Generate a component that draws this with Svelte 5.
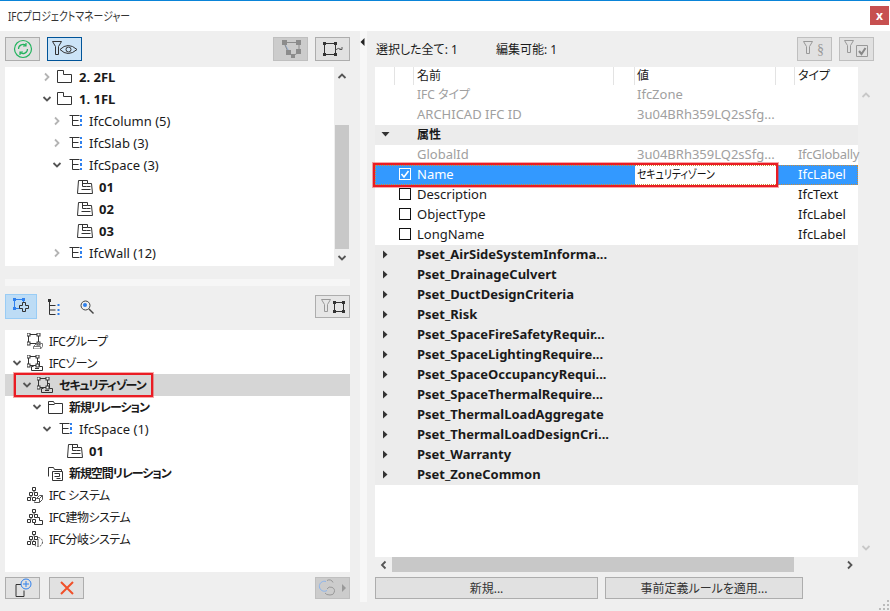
<script>
  const upperTree = [
    { depth: 3, arrow: 'closed', icon: 'story', label: '2. 2FL', bold: true },
    { depth: 3, arrow: 'open', icon: 'story', label: '1. 1FL', bold: true },
    { depth: 4, arrow: 'closed', icon: 'type', label: 'IfcColumn (5)' },
    { depth: 4, arrow: 'closed', icon: 'type', label: 'IfcSlab (3)' },
    { depth: 4, arrow: 'open', icon: 'type', label: 'IfcSpace (3)' },
    { depth: 5, icon: 'space', label: '01', bold: true },
    { depth: 5, icon: 'space', label: '02', bold: true },
    { depth: 5, icon: 'space', label: '03', bold: true },
    { depth: 4, arrow: 'closed', icon: 'type', label: 'IfcWall (12)' }
  ];

  const lowerTree = [
    { depth: 0, icon: 'group', label: 'IFCグループ' },
    { depth: 0, arrow: 'open', icon: 'zone', label: 'IFCゾーン' },
    { depth: 1, arrow: 'open', icon: 'zone', label: 'セキュリティゾーン', bold: true, selected: true },
    { depth: 2, arrow: 'open', icon: 'folder', label: '新規リレーション', bold: true },
    { depth: 3, arrow: 'open', icon: 'type', label: 'IfcSpace (1)' },
    { depth: 4, icon: 'space', label: '01', bold: true },
    { depth: 2, icon: 'folderspace', label: '新規空間リレーション', bold: true },
    { depth: 0, icon: 'sysbox', label: 'IFC システム' },
    { depth: 0, icon: 'sysbuilding', label: 'IFC建物システム' },
    { depth: 0, icon: 'sysround', label: 'IFC分岐システム' }
  ];

  const psets = [
    'Pset_AirSideSystemInforma...',
    'Pset_DrainageCulvert',
    'Pset_DuctDesignCriteria',
    'Pset_Risk',
    'Pset_SpaceFireSafetyRequir...',
    'Pset_SpaceLightingRequire...',
    'Pset_SpaceOccupancyRequi...',
    'Pset_SpaceThermalRequire...',
    'Pset_ThermalLoadAggregate',
    'Pset_ThermalLoadDesignCri...',
    'Pset_Warranty',
    'Pset_ZoneCommon'
  ];

  const attrs = [
    { name: 'Description', type: 'IfcText' },
    { name: 'ObjectType', type: 'IfcLabel' },
    { name: 'LongName', type: 'IfcLabel' }
  ];

  const isJa = (text) => /[\u3000-\u9fff]/.test(text);
</script>

{#snippet chevron(dir, color)}
  <svg class="chev" width="10" height="10" viewBox="0 0 10 10" fill="none" stroke={color} stroke-width="1.8">
    {#if dir === 'closed'}<path d="M3 1.5 L6.5 5 L3 8.5" />
    {:else if dir === 'open'}<path d="M1.5 3 L5 6.5 L8.5 3" />
    {:else if dir === 'up'}<path d="M1.5 7 L5 3.5 L8.5 7" />
    {:else if dir === 'left'}<path d="M6.5 1.5 L3 5 L6.5 8.5" />{/if}
  </svg>
{/snippet}

{#snippet frame(x, y, w, h, c)}
  <path d="M{x + 0.5} {y + 0.5} h{w} v{h} h-{w} z" fill="none" stroke={c} />
  <rect x={x - 1} y={y - 1} width="3" height="3" fill={c} />
  <rect x={x + w - 1} y={y - 1} width="3" height="3" fill={c} />
  <rect x={x - 1} y={y + h - 1} width="3" height="3" fill={c} />
  <rect x={x + w - 1} y={y + h - 1} width="3" height="3" fill={c} />
{/snippet}

{#snippet hollow(x, y, w, h)}
  <path d="M{x + 0.5} {y + 0.5} h{w} v{h} h-{w} z" fill="none" stroke="#333" />
  <rect x={x - 1} y={y - 1} width="3" height="3" fill="#fff" stroke="#333" />
  <rect x={x + w - 1} y={y - 1} width="3" height="3" fill="#fff" stroke="#333" />
  <rect x={x - 1} y={y + h - 1} width="3" height="3" fill="#fff" stroke="#333" />
  <rect x={x + w - 1} y={y + h - 1} width="3" height="3" fill="#fff" stroke="#333" />
{/snippet}

{#snippet nodes()}
  <path d="M5.5 0.5 h3 v3 h-3 z M2.5 5.5 h3 v3 h-3 z M7.5 5.5 h3 v3 h-3 z M0.5 10.5 h3 v3 h-3 z M5.5 10.5 h3 v3 h-3 z" fill="#fff" stroke="#333" />
  <path d="M7 3.5 v2 M4 8.5 v2" stroke="#333" />
{/snippet}

{#snippet icon(name)}
  <svg class="icon" width="16" height="16" viewBox="0 0 16 16" fill="none" stroke="#333">
    {#if name === 'story'}
      <path d="M0.5 1.5 h6 v4 h8 v8 h-14 z" />
    {:else if name === 'type'}
      <path d="M2.5 2.5 h10 M5.5 2.5 v10 M5.5 7.5 h6 M5.5 12.5 h7" />
      <path d="M14 2 v2 M14 6 v3 M14 11 v2" stroke="#2f80ed" stroke-width="2" />
    {:else if name === 'space'}
      <path d="M0.5 14.5 L1.5 1.5 H10.5 V4.5 H14.5 L15.5 14.5 Z" />
      <path d="M5.5 1.5 V7.5 H9.5 M5.5 4.5 H10.5 M9.5 7.5 H13.5 M4.5 10.5 H13.5" />
    {:else if name === 'group'}
      {@render hollow(1, 1, 10, 9)}
      <path d="M6.5 13.5 l3 -3 h6 v3 l-2 2.5 h-7 z M13.5 13.5 h-7 M13.5 13.5 v2.5" stroke="#777" />
    {:else if name === 'zone'}
      {@render hollow(1, 1, 9, 9)}
      <path d="M10.5 6.5 h2 v5 h3 v4 h-11 v-4 h2" />
      <path d="M8 13.5 h4" />
    {:else if name === 'folder'}
      <path d="M1.5 14.5 v-12 h5 l1 2 h8 v10 z M1.5 5.5 h6" />
    {:else if name === 'folderspace'}
      <path d="M1.5 11.5 v-9 h5 l1 2 h7 v2" />
      <path d="M5.5 15.5 v-9 h10 v9 z M7.5 8.5 h5 v3 h-5 M9.5 13.5 h4" />
    {:else if name === 'sysbox'}
      <path d="M9.5 11.5 l3 -3 h3 v4 l-3 3 h-5 v-1 M12.5 11.5 h-3 M12.5 11.5 v4 M12.5 11.5 l3 -3" stroke="#555" />
      {@render nodes()}
    {:else if name === 'sysbuilding'}
      <path d="M10.5 8.5 h2 v3 h3 v4 h-8 v-2" stroke="#333" />
      {@render nodes()}
    {:else if name === 'sysround'}
      <circle cx="11" cy="11" r="4.5" stroke="#555" stroke-dasharray="2 1" />
      <path d="M11 8 v7" stroke="#555" />
      {@render nodes()}
    {/if}
  </svg>
{/snippet}

{#snippet tree(rows)}
  {#each rows as row}
    <div class="row" class:selected={row.selected} style="padding-left: {5 + row.depth * 10}px">
      <span class="arrow">
        {#if row.arrow}{@render chevron(row.arrow, row.arrow === 'open' ? '#555' : '#b4b4b4')}{/if}
      </span>
      {@render icon(row.icon)}
      <span class="label" class:bold={row.bold} class:ja={isJa(row.label)}>{row.label}</span>
      {#if row.selected}<span class="redbox tree-red"></span>{/if}
    </div>
  {/each}
{/snippet}

<div class="window">
  <header class="titlebar">
    <span class="narrow">IFCプロジェクトマネージャー</span>
    <button class="close">x</button>
  </header>

  <div class="body">
    <section class="left">
      <div class="toolbar">
        <button class="tool">
          <svg width="22" height="22" viewBox="0 0 22 22" fill="none" stroke="#22b35e" stroke-width="1.2">
            <circle cx="11" cy="11" r="8.5" />
            <path d="M6.5 11 a4.5 4.5 0 0 1 7.5 -3.4 M14 5 v3 h-3 M15.5 11 a4.5 4.5 0 0 1 -7.5 3.4 M8 17 v-3 h3" />
          </svg>
        </button>
        <button class="tool on">
          <svg width="26" height="18" viewBox="0 0 26 18" fill="none" stroke="#333">
            <path d="M0.5 1.5 h9 l-3 5 v8 h-3 v-8 z" />
            <path d="M8 9.5 q8 -8 17 0 q-9 8 -17 0 z" />
            <circle cx="16.5" cy="9.5" r="2.5" />
          </svg>
        </button>
        <span class="spacer"></span>
        <button class="tool off">
          <svg width="22" height="20" viewBox="0 0 22 20" fill="none">
            <path d="M4 4 L11 16" stroke="#9cb4d8" stroke-width="1.4" />
            <path d="M4 3.5 H19 V13 L13 17 L8 13 Z" stroke="#8c8c8c" />
            <rect x="2" y="1" width="5" height="5" fill="#8c8c8c" />
            <rect x="16" y="1" width="5" height="5" fill="#8c8c8c" />
            <rect x="6" y="11" width="5" height="5" fill="#8c8c8c" />
            <rect x="16" y="10" width="5" height="5" fill="#8c8c8c" />
            <rect x="11" y="15" width="4" height="4" fill="#8c8c8c" />
          </svg>
        </button>
        <button class="tool gap">
          <svg width="22" height="18" viewBox="0 0 22 18" fill="none">
            {@render frame(2, 3, 11, 11, '#333')}
            <path d="M13.5 10 q2.5 -3 6 -0.5 M20 7 v2.5 h-2.5" stroke="#555" />
          </svg>
        </button>
      </div>

      <div class="upper">
        <div class="list top">{@render tree(upperTree)}</div>
        <div class="vscroll">
          <span class="chev-slot">{@render chevron('up', '#555')}</span>
          <span class="thumb"></span>
          <span class="chev-slot">{@render chevron('open', '#555')}</span>
        </div>
      </div>

      <div class="strip"></div>

      <div class="toolbar second">
        <button class="tool plus">
          <svg width="18" height="20" viewBox="0 0 18 20" fill="none">
            {@render frame(2, 2, 9, 9, '#2f80ed')}
            <path d="M7.5 8.5 h3 v-3 h3 v3 h3 v3 h-3 v3 h-3 v-3 h-3 z" stroke="#333" fill="#bddcf5" />
          </svg>
        </button>
        <span class="plain p1">
          <svg width="12" height="18" viewBox="0 0 12 18" fill="none" stroke="#333">
            <rect x="0" y="1" width="3" height="3" fill="#333" stroke="none" />
            <path d="M1.5 3 v13.5 h6 M1.5 7.5 h6 M1.5 12 h6" />
            <path d="M10.5 6 v2 M10.5 11 v2 M10.5 15 v2" stroke="#2f80ed" stroke-width="2" />
          </svg>
        </span>
        <span class="plain p2">
          <svg width="14" height="14" viewBox="0 0 14 14" fill="none" stroke="#444">
            <circle cx="5.5" cy="5.5" r="4.5" />
            <circle cx="5" cy="5" r="2" fill="#2f80ed" stroke="none" />
            <path d="M9 9 L13.5 13.5" stroke-width="1.4" />
          </svg>
        </span>
        <span class="spacer"></span>
        <button class="tool flat">
          <svg width="24" height="16" viewBox="0 0 24 16" fill="none">
            <path d="M0.5 0.5 h9 l-3 5 v7 h-3 v-7 z" stroke="#999" />
            {@render frame(13, 3, 9, 9, '#333')}
          </svg>
        </button>
      </div>

      <div class="list bottom">{@render tree(lowerTree)}</div>

      <div class="toolbar footer">
        <button class="tool">
          <svg width="20" height="20" viewBox="0 0 20 20" fill="none">
            <path d="M10 6.5 h-7 v12 h8 v-6" stroke="#333" />
            <circle cx="13" cy="6" r="5" stroke="#2f80ed" fill="#e1e1e1" />
            <path d="M13 3 v6 M10 6 h6" stroke="#2f80ed" />
          </svg>
        </button>
        <button class="tool gap-del">
          <svg width="16" height="16" viewBox="0 0 16 16" fill="none" stroke="#f0502a" stroke-width="2">
            <path d="M2 2 L14 14 M14 2 L2 14" />
          </svg>
        </button>
        <span class="spacer"></span>
        <button class="tool off">
          <svg width="30" height="18" viewBox="0 0 30 18" fill="none">
            <path d="M8 2.5 a5 5 0 1 0 1 9" stroke="#8ab4ee" />
            <path d="M9 1.5 a4 4 0 0 1 6 2 M9 10 a4 4 0 1 1 3 6 q-4 0 -5 -2" stroke="#999" />
            <path d="M24 5 l4 4 l-4 4 z" fill="#999" />
          </svg>
        </button>
      </div>
    </section>

    <div class="splitter">
      <svg width="5" height="8" viewBox="0 0 5 8"><path d="M4.5 0 V8 L0.5 4 z" fill="#222" /></svg>
    </div>

    <section class="right">
      <div class="toolbar stats">
        <span class="stat first">選択した全て: 1</span>
        <span class="stat">編集可能: 1</span>
        <span class="spacer"></span>
        <button class="tool off2">
          <svg width="30" height="18" viewBox="0 0 30 18" fill="none">
            <path d="M3.5 1.5 h9 l-3 5 v7 h-3 v-7 z" stroke="#999" />
            <text x="17" y="14" font-size="14" fill="#999" stroke="none" font-family="Liberation Serif">§</text>
          </svg>
        </button>
        <button class="tool off2 gap">
          <svg width="28" height="18" viewBox="0 0 28 18" fill="none">
            <path d="M1.5 0.5 h9 l-3 5 v7 h-3 v-7 z" stroke="#999" />
            <path d="M13.5 5.5 h11 v11 h-11 z" stroke="#999" />
            <path d="M16 11 l2.5 3 l4 -6" stroke="#888" stroke-width="2" />
          </svg>
        </button>
      </div>

      <div class="table-wrap">
        <div class="table">
          <div class="thead">
            <span class="h h1"></span><span class="h h2"></span>
            <span class="h h3">名前</span><span class="h h4"></span>
            <span class="h h5">値</span><span class="h h6"></span>
            <span class="h h7">タイプ</span>
          </div>

          <div class="tr dim"><span></span><span class="small">IFC タイプ</span><span>IfcZone</span><span></span></div>
          <div class="tr dim"><span></span><span>ARCHICAD IFC ID</span><span>3u04BRh359LQ2sSfg...</span><span></span></div>
          <div class="tr grp">
            <span class="tri"><svg width="9" height="5" viewBox="0 0 9 5"><path d="M0.5 0 H8.5 L4.5 4.5 z" fill="#333" /></svg></span>
            <span class="small">属性</span><span></span><span></span>
          </div>
          <div class="tr dim"><span></span><span>GlobalId</span><span>3u04BRh359LQ2sSfg...</span><span class="fit">IfcGlobally</span></div>

          <div class="tr picked">
            <span class="checkcell">
              <svg width="12" height="12" viewBox="0 0 12 12" fill="none" stroke="#fff">
                <rect x="0.5" y="0.5" width="11" height="11" />
                <path d="M2.5 6 l2.5 3 l4.5 -6" stroke-width="1.6" />
              </svg>
            </span>
            <span>Name</span>
            <span class="editing"><span class="narrow">セキュリティゾーン</span></span>
            <span>IfcLabel</span>
            <span class="redbox name-red"></span>
          </div>

          {#each attrs as attr}
            <div class="tr">
              <span class="checkcell"><span class="box"></span></span>
              <span>{attr.name}</span><span></span><span>{attr.type}</span>
            </div>
          {/each}

          {#each psets as pset}
            <div class="tr grp">
              <span class="tri"><svg width="5" height="9" viewBox="0 0 5 9"><path d="M0 0.5 V8.5 L4.5 4.5 z" fill="#333" /></svg></span>
              <span>{pset}</span><span></span><span></span>
            </div>
          {/each}
        </div>
        <div class="vscroll wide">
          <span class="chev-slot">{@render chevron('up', '#c8c8c8')}</span>
          <span class="spacer"></span>
          <span class="chev-slot">{@render chevron('open', '#c8c8c8')}</span>
        </div>
      </div>

      <div class="hscroll">
        <span class="hslot">{@render chevron('left', '#555')}</span>
        <span class="hthumb"></span>
        <span class="spacer"></span>
        <span class="hslot">{@render chevron('closed', '#555')}</span>
      </div>

      <div class="actions">
        <button class="action one">新規...</button>
        <button class="action two">事前定義ルールを適用...</button>
      </div>
    </section>
  </div>
  <svg class="grip" width="11" height="11" viewBox="0 0 11 11" fill="#bbb">
    <rect x="8" y="0" width="2" height="2" /><rect x="4" y="4" width="2" height="2" /><rect x="8" y="4" width="2" height="2" />
    <rect x="0" y="8" width="2" height="2" /><rect x="4" y="8" width="2" height="2" /><rect x="8" y="8" width="2" height="2" />
  </svg>
</div>

<style>
  :global(body) {
    margin: 0;
  }

  .window {
    position: relative;
    width: 890px;
    height: 611px;
    overflow: hidden;
    display: flex;
    flex-direction: column;
    background: #efefef;
    color: #1a1a1a;
    font-family: "Noto Sans", "Noto Sans CJK JP", sans-serif;
    font-size: 13px;
    font-feature-settings: "palt";
  }

  button {
    font: inherit;
    font-feature-settings: inherit;
    color: inherit;
    padding: 0;
    margin: 0;
  }

  svg {
    display: block;
    flex: none;
  }

  /* kana in the original font are much narrower than Noto's */
  .narrow {
    display: inline-block;
    font-size: 12px;
    transform: scaleX(0.82);
    transform-origin: left center;
  }

  .titlebar {
    flex: none;
    height: 30px;
    border-top: 1px solid #0a84d8;
    background: #fff;
    display: flex;
    align-items: center;
    justify-content: space-between;
    padding-left: 8px;
    color: #333;
  }

  .close {
    width: 19px;
    height: 19px;
    margin-top: -1px;
    margin-right: 1px;
    border: none;
    background: #c75050;
    color: #fff;
    font-size: 12px;
    font-weight: 700;
    line-height: 15px;
  }

  .body {
    flex: 1;
    display: flex;
    min-height: 0;
  }

  .left {
    width: 345px;
    margin-left: 5px;
    padding-top: 6px;
    flex: none;
    display: flex;
    flex-direction: column;
  }

  .toolbar {
    display: flex;
    align-items: center;
    height: 24px;
    flex: none;
  }

  .spacer {
    flex: 1;
  }

  .tool {
    width: 35px;
    height: 24px;
    flex: none;
    box-sizing: border-box;
    border: 1px solid #adadad;
    background: #e1e1e1;
    display: flex;
    align-items: center;
    justify-content: center;
  }

  .tool.on {
    margin-left: 7px;
    background: #cce4f7;
    border-color: #005499;
  }

  .tool.off {
    background: #cccccc;
    border-color: #bfbfbf;
  }

  .tool.off2 {
    background: #e1e1e1;
    border-color: #bfbfbf;
  }

  .tool.gap {
    margin-left: 7px;
  }

  .upper {
    display: flex;
    height: 199px;
    margin-top: 6px;
    flex: none;
  }

  .list {
    background: #fff;
    overflow: hidden;
  }

  .list.top {
    width: 329px;
    flex: none;
  }

  .list.top .row:first-child {
    margin-top: -1px;
  }

  .vscroll {
    flex: 1;
    display: flex;
    flex-direction: column;
  }

  .vscroll.wide {
    flex: none;
    width: 16px;
  }

  .chev-slot {
    height: 18px;
    display: flex;
    align-items: center;
    justify-content: center;
    flex: none;
  }

  .thumb {
    height: 124px;
    margin: 40px 1px 0;
    background: #c8c8c8;
    flex: none;
  }

  .strip {
    height: 7px;
    margin-top: 13px;
    background: #f6f6f6;
    flex: none;
  }

  .toolbar.second {
    height: 25px;
    margin-top: 8px;
  }

  .tool.plus {
    width: 32px;
    height: 25px;
    background: #bddcf5;
    border-color: #99ccf5;
  }

  .plain {
    display: flex;
    justify-content: center;
  }

  .plain.p1 {
    width: 34px;
  }

  .plain.p2 {
    width: 31px;
  }

  .tool.flat {
    height: 23px;
    background: #e6e6e6;
  }

  .list.bottom {
    height: 242px;
    margin-top: 11px;
    flex: none;
  }

  .row {
    position: relative;
    height: 22px;
    display: flex;
    align-items: center;
    box-sizing: border-box;
    white-space: nowrap;
  }

  .row.selected {
    background: #d6d6d6;
  }

  .arrow {
    width: 14px;
    margin-right: 3px;
    display: flex;
    justify-content: center;
    flex: none;
  }

  .label {
    margin-left: 6px;
  }

  .label.ja {
    font-size: 12px;
    letter-spacing: -0.5px;
  }

  .label.ja.bold {
    letter-spacing: -1.1px;
  }

  .bold {
    font-weight: 700;
  }

  .redbox {
    position: absolute;
    box-sizing: border-box;
    border: 2px solid #ea1c24;
    box-shadow: 0 0 0 1px rgba(234, 40, 40, 0.4);
    pointer-events: none;
  }

  .tree-red {
    left: 9px;
    top: -1px;
    width: 139px;
    height: 24px;
  }

  .toolbar.footer {
    height: 22px;
    margin-top: 5px;
  }

  .footer .tool {
    height: 22px;
  }

  .tool.gap-del {
    margin-left: 9px;
  }

  .splitter {
    width: 7px;
    height: 571px;
    margin-left: 10px;
    padding: 7px 0 0 0;
    box-sizing: border-box;
    background: #f7f7f7;
    flex: none;
  }

  .right {
    flex: 1;
    margin-left: 8px;
    padding-top: 6px;
    display: flex;
    flex-direction: column;
    min-width: 0;
  }

  .stats {
    padding-right: 16px;
    font-size: 12px;
  }

  .stat.first {
    margin-left: 1px;
    width: 120px;
  }

  .table-wrap {
    display: flex;
    height: 490px;
    margin-top: 6px;
    flex: none;
  }

  .table {
    position: relative;
    width: 483px;
    background: #fff;
    flex: none;
  }

  .table-wrap .vscroll {
    padding-top: 19px;
  }

  .thead {
    height: 18px;
    display: flex;
    align-items: center;
    background: #fff;
    font-size: 12px;
  }

  .h {
    height: 18px;
    box-sizing: border-box;
    border-right: 1px solid #e3e3e3;
    line-height: 17px;
    flex: none;
  }

  .h1 { width: 20px; }
  .h2 { width: 19px; }
  .h3 { width: 200px; padding-left: 3px; }
  .h4 { width: 21px; }
  .h5 { width: 141px; padding-left: 2px; }
  .h6 { width: 19px; }
  .h7 { padding-left: 3px; border-right: none; }

  .tr {
    position: relative;
    height: 20px;
    box-sizing: border-box;
    padding-bottom: 2px;
    display: grid;
    grid-template-columns: 42px 220px 161px 60px;
    grid-template-rows: 18px;
    align-items: center;
    white-space: nowrap;
  }

  .small {
    font-size: 12px;
  }

  .fit {
    letter-spacing: -0.3px;
  }

  .tr.dim {
    color: #a0a0a0;
  }

  .tr.grp {
    background: #ececec;
    font-weight: 700;
  }

  .tri {
    display: flex;
    justify-content: center;
    width: 20px;
  }

  .checkcell {
    padding-left: 24px;
    display: flex;
  }

  .box {
    width: 12px;
    height: 12px;
    box-sizing: border-box;
    border: 1px solid #111;
    background: #fff;
  }

  .tr.picked {
    background: #3399ff;
    color: #fff;
    outline: 1px dotted #c98b3a;
    outline-offset: -1px;
  }

  .editing {
    align-self: start;
    width: 141px;
    height: 20px;
    margin-left: -2px;
    padding-left: 2px;
    box-sizing: border-box;
    background: #fff;
    color: #111;
    line-height: 18px;
  }

  .name-red {
    left: -2px;
    top: -2px;
    width: 405px;
    height: 24px;
  }

  .hscroll {
    height: 15px;
    width: 483px;
    display: flex;
    align-items: center;
    flex: none;
  }

  .hslot {
    width: 17px;
    display: flex;
    justify-content: center;
    flex: none;
  }

  .hthumb {
    width: 402px;
    height: 15px;
    background: #c8c8c8;
    flex: none;
  }

  .actions {
    display: flex;
    gap: 7px;
    margin-top: 5px;
    font-size: 12px;
  }

  .action {
    height: 22px;
    box-sizing: border-box;
    border: 1px solid #adadad;
    background: #e1e1e1;
    color: #333;
  }

  .action.one {
    width: 223px;
  }

  .action.two {
    width: 198px;
  }

  .grip {
    position: absolute;
    right: 0;
    bottom: 0;
  }
</style>
